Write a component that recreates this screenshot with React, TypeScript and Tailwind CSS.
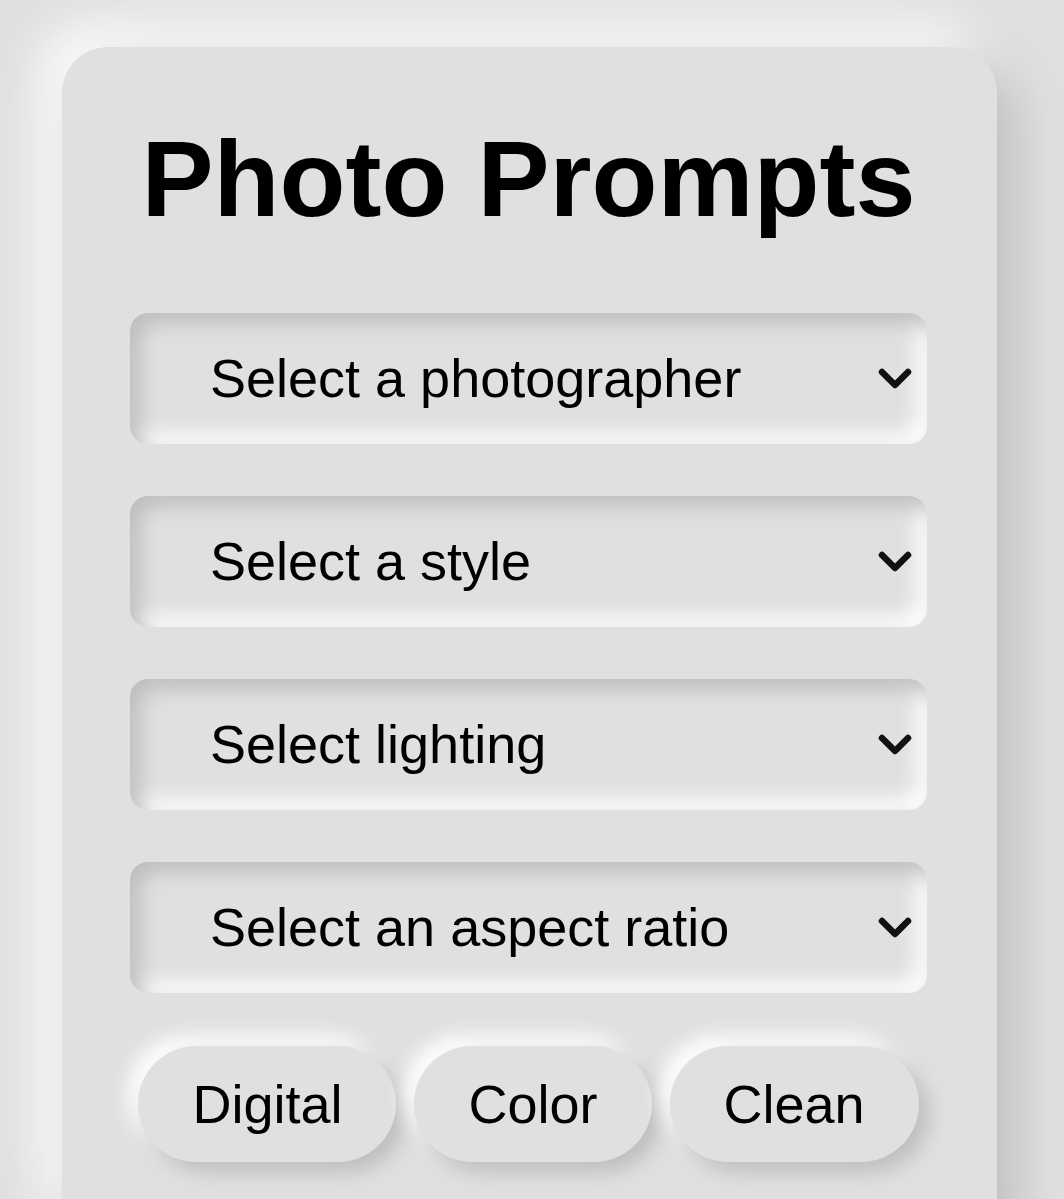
import React from "react";

const selects = [
  "Select a photographer",
  "Select a style",
  "Select lighting",
  "Select an aspect ratio",
];

const pills = ["Digital", "Color", "Clean"];

function Chevron() {
  return (
    <svg
      className="pointer-events-none absolute right-[15px] top-1/2 -translate-y-1/2"
      width="34"
      height="22"
      viewBox="0 0 34 22"
      fill="none"
    >
      <path
        d="M4 4 L17 17 L30 4"
        stroke="#111"
        strokeWidth="6.5"
        strokeLinecap="round"
        strokeLinejoin="round"
      />
    </svg>
  );
}

export default function App() {
  return (
    <div
      className="min-h-[1199px] w-full bg-[#e0e0e0] pt-[47px]"
      style={{ fontFamily: '"Liberation Sans", Arial, sans-serif' }}
    >
      <div className="ml-[62px] w-[935px] rounded-[46px] bg-[#e0e0e0] pb-[80px] pl-[68px] pr-[70px] pt-[70px] shadow-[20px_20px_50px_#bebebe,-20px_-20px_50px_#ffffff]">
        <h1 className="text-center text-[108px] font-bold leading-[1.149] text-black">
          Photo Prompts
        </h1>
        <div className="mt-[72px] flex flex-col gap-[52px]">
          {selects.map((s) => (
            <div key={s} className="relative">
              <select
                defaultValue=""
                className="h-[131px] w-full appearance-none rounded-[18px] border-0 bg-[#e0e0e0] pl-[80px] pr-[60px] text-[54px] text-black shadow-[inset_10px_10px_20px_#bebebe,inset_-10px_-10px_20px_#ffffff] outline-none"
              >
                <option value="">{s}</option>
              </select>
              <Chevron />
            </div>
          ))}
        </div>
        <div className="mt-[53px] flex justify-center gap-[18px]">
          {pills.map((p) => (
            <button
              key={p}
              className="rounded-full bg-[#e0e0e0] px-[54px] py-[27px] text-[54px] leading-[1.149] text-black shadow-[10px_10px_20px_#bebebe,-10px_-10px_20px_#ffffff]"
            >
              {p}
            </button>
          ))}
        </div>
      </div>
    </div>
  );
}
